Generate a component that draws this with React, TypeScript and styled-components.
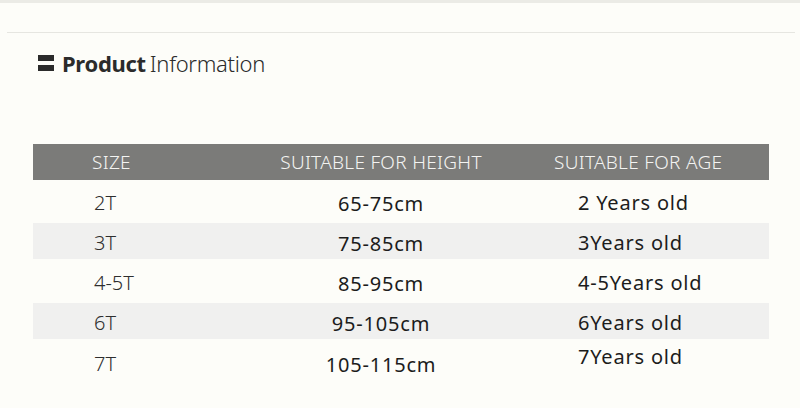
import React from "react";
import styled, { createGlobalStyle } from "styled-components";

const GlobalStyle = createGlobalStyle`
  html, body {
    margin: 0;
    padding: 0;
    background: #fdfdf9;
  }
  body {
    font-family: "Noto Sans", "Open Sans", sans-serif;
    width: 800px;
    height: 408px;
    overflow: hidden;
  }
`;

const rows = [
  { size: "2T", height: "65-75cm", age: "2 Years old", shaded: false },
  { size: "3T", height: "75-85cm", age: "3Years old", shaded: true },
  { size: "4-5T", height: "85-95cm", age: "4-5Years old", shaded: false },
  { size: "6T", height: "95-105cm", age: "6Years old", shaded: true },
  { size: "7T", height: "105-115cm", age: "7Years old", shaded: false, raise: true },
];

const Page = styled.div`
  width: 800px;
  height: 408px;
  background: #fdfdf9;
  border-top: 3px solid #ebebe6;
  box-sizing: border-box;
`;

const TopRule = styled.div`
  margin: 29px 5px 0 7px;
  height: 1px;
  background: #e6e6e1;
`;

const TitleRow = styled.div`
  display: flex;
  align-items: center;
  gap: 8px;
  padding: 15px 0 0 38px;
  height: 30px;
`;

const TitleMark = styled.div`
  display: flex;
  flex-direction: column;
  gap: 4px;
  span {
    width: 16px;
    height: 6px;
    background: #2b2b2b;
  }
`;

const TitleText = styled.h2`
  margin: 0;
  font-size: 22px;
  font-weight: 300;
  color: #2b2b2b;
  letter-spacing: -0.3px;
  b {
    font-weight: 700;
    margin-right: 4px;
  }
`;

const Table = styled.div`
  margin: 66px 31px 0 33px;
  display: flex;
  flex-direction: column;
  gap: 3px;
`;

const Head = styled.div`
  display: grid;
  grid-template-columns: 200px 296px 1fr;
  align-items: center;
  height: 36px;
  background: #7b7b79;
`;

const HeadCell = styled.div<{ $center?: boolean; $pad: number }>`
  font-size: 19px;
  font-weight: 300;
  letter-spacing: 0.3px;
  color: #f4f4f2;
  padding-left: ${(p) => p.$pad}px;
  text-align: ${(p) => (p.$center ? "center" : "left")};
  white-space: nowrap;
`;

const Row = styled.div<{ $shaded: boolean }>`
  display: grid;
  grid-template-columns: 200px 296px 1fr;
  align-items: center;
  height: 36px;
  margin-bottom: 1px;
  background: ${(p) => (p.$shaded ? "#f0f0ef" : "transparent")};
`;

const SizeCell = styled.div`
  padding: 3px 0 0 61px;
  font-size: 20px;
  font-weight: 300;
  color: #2e2e2e;
`;

const HeightCell = styled.div`
  text-align: center;
  font-size: 20px;
  letter-spacing: 0.8px;
  color: #1c1c1c;
  padding-top: 5px;
`;

const AgeCell = styled.div<{ $raise?: boolean }>`
  padding-left: 49px;
  font-size: 20px;
  letter-spacing: 0.8px;
  color: #1c1c1c;
  padding-top: ${(p) => (p.$raise ? 0 : 3)}px;
  padding-bottom: ${(p) => (p.$raise ? 10 : 0)}px;
`;

export default function App() {
  return (
    <Page>
      <GlobalStyle />
      <TopRule />
      <TitleRow>
        <TitleMark>
          <span />
          <span />
        </TitleMark>
        <TitleText>
          <b>Product</b>Information
        </TitleText>
      </TitleRow>
      <Table>
        <Head>
          <HeadCell $pad={59}>SIZE</HeadCell>
          <HeadCell $pad={0} $center>
            SUITABLE FOR HEIGHT
          </HeadCell>
          <HeadCell $pad={25}>SUITABLE FOR AGE</HeadCell>
        </Head>
        {rows.map((r) => (
          <Row key={r.size} $shaded={r.shaded}>
            <SizeCell>{r.size}</SizeCell>
            <HeightCell>{r.height}</HeightCell>
            <AgeCell $raise={r.raise}>{r.age}</AgeCell>
          </Row>
        ))}
      </Table>
    </Page>
  );
}
